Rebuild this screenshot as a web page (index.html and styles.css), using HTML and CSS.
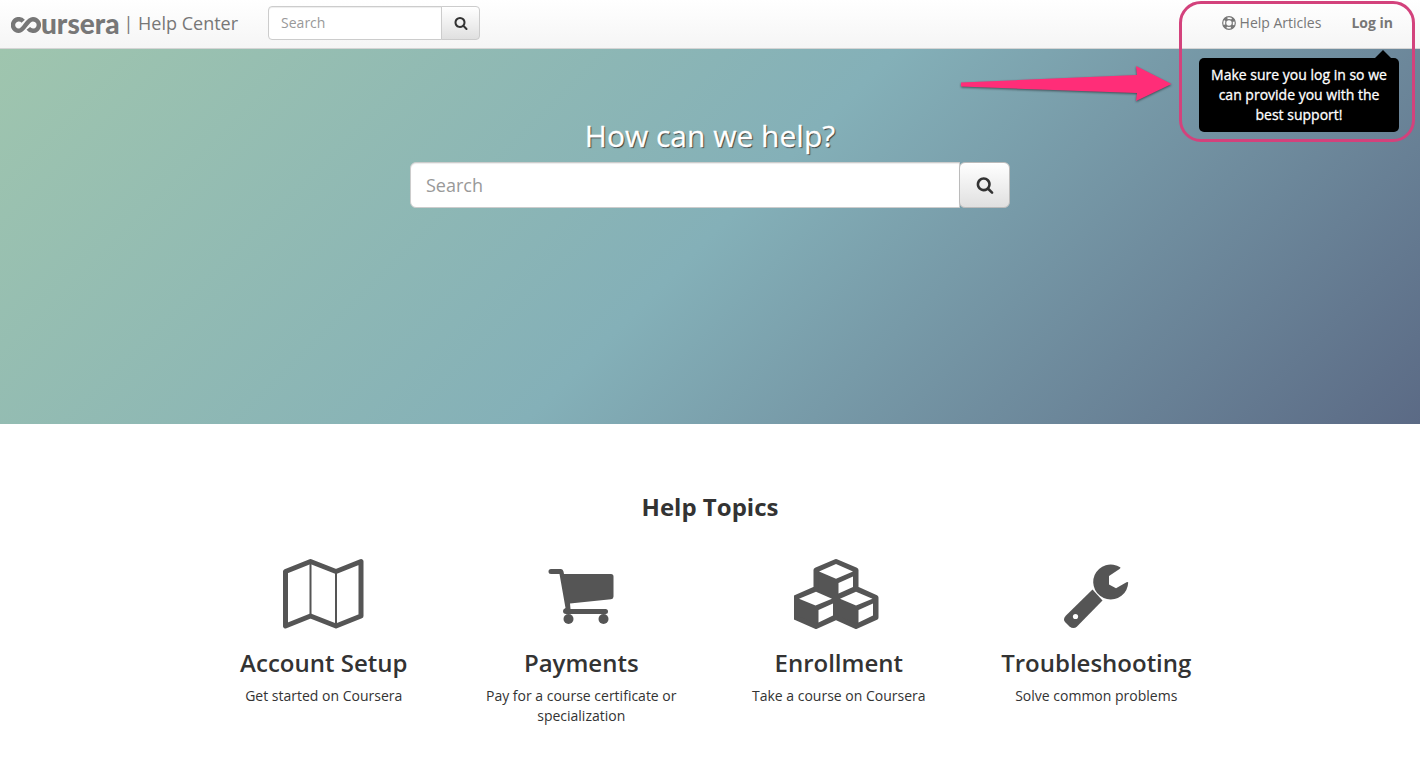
FILE: index.html
```html
<!DOCTYPE html>
<html lang="en">
<head>
    <meta charset="UTF-8">
    <meta name="viewport" content="width=device-width, initial-scale=1.0">
    <title>Coursera Help Center</title>
    <link rel="stylesheet" href="styles.css">
</head>
<body>
    <!-- icons used more than once -->
    <svg class="hidden" width="0" height="0" aria-hidden="true">
        <symbol id="icon-search" viewBox="0 0 1792 1792">
            <path d="M1216 832q0-185-131.5-316.5T768 384 451.5 515.5 320 832t131.5 316.5T768 1280t316.5-131.5T1216 832zm512 832q0 52-38 90t-90 38q-54 0-90-38l-343-342q-179 124-399 124-143 0-273.5-55.5t-225-150-150-225T64 832t55.5-273.5 150-225 225-150T768 128t273.5 55.5 225 150 150 225T1472 832q0 220-124 399l343 343q37 37 37 90z"/>
        </symbol>
    </svg>

    <!-- Navbar -->
    <header class="navbar">
        <a href="#" class="brand">
            <span class="logo">
                <svg class="logo-mark" viewBox="0 0 30 16" role="img" aria-label="co">
                    <path d="M12.200 4.200A5.800 5.800 0 1 0 8 13.800C13.500 13.800 15.500 2.200 22 2.200A5.800 5.800 0 1 1 17.300 11.400"/>
                </svg>
                <span class="logo-word">ursera</span>
            </span>
            <span class="brand-text">| Help Center</span>
        </a>
        <form action="#" class="search search-small">
            <input type="text" name="q" placeholder="Search" aria-label="Search help">
            <button type="submit" aria-label="Search"><svg><use href="#icon-search"/></svg></button>
        </form>
        <nav class="nav-links">
            <a href="#" class="nav-link">
                <svg class="icon-help" viewBox="0 0 14 14">
                    <circle cx="7" cy="7" r="6.300"/>
                    <circle cx="7" cy="7" r="3.300"/>
                    <circle class="ring" cx="7" cy="7" r="5"/>
                </svg>
                Help Articles
            </a>
            <div class="login">
                <a href="#" class="nav-link nav-login" aria-describedby="login-tip">Log in</a>
                <div class="tooltip" id="login-tip" role="tooltip">Make sure you log in so we can provide you with the best support!</div>
            </div>
        </nav>
    </header>

    <!-- callout around the login link -->
    <div class="callout"></div>
    <svg class="callout-arrow" viewBox="0 0 216 44" aria-hidden="true">
        <path d="M3 20.500 179 13 178 4 213.500 22 178 39 179 31 3 24.500Z"/>
    </svg>

    <!-- Hero -->
    <section class="hero">
        <h1>How can we help?</h1>
        <form action="#" class="search search-large">
            <input type="text" name="query" placeholder="Search" aria-label="Search all articles">
            <button type="submit" aria-label="Search"><svg><use href="#icon-search"/></svg></button>
        </form>
    </section>

    <!-- Topics -->
    <main class="topics">
        <h2>Help Topics</h2>
        <div class="topic-grid">
            <a href="#" class="topic">
                <svg class="topic-icon" viewBox="9 4 90 80">
                    <path class="line" d="M15.500 21.500 40.500 11.500 66 21.500 91 11.500V66L66 76 40.500 66 15.500 76Z"/>
                    <path class="fold" d="M40.500 12V66M66 22V76"/>
                </svg>
                <h3>Account Setup</h3>
                <p>Get started on Coursera</p>
            </a>
            <a href="#" class="topic">
                <svg class="topic-icon" viewBox="1 4 90 80">
                    <path d="M16 19H26Q28 19 28.500 21.500L29 24H76Q78.500 24 78.500 26.500V46.500Q78.500 49 76 49.300L35 53.500 35.500 59H70.500A2.500 2.500 0 0 1 70.500 64H31Q28 64 28 61 28 59 30.500 58L24.500 24H16A2.500 2.500 0 0 1 16 19Z"/>
                    <circle cx="33.500" cy="69" r="5"/>
                    <circle cx="68.500" cy="69" r="5"/>
                </svg>
                <h3>Payments</h3>
                <p>Pay for a course certificate or specialization</p>
            </a>
            <a href="#" class="topic">
                <svg class="topic-icon" viewBox="14 4 90 80">
                    <path class="solid" d="M56 11.500 76 20V38.500L96 47.500V67.500L76 76.500 56 67.500 36 76.500 15.500 67.500V47.500L36 38.500V20Z"/>
                    <path class="face" d="M56 14 73 21.500 56 28.700 39 21.500ZM58.500 33 73 26.500V37L58.500 43.500ZM36 41.800 52 48.800 35.500 55.500 19 48.800ZM38.500 60 53 53.500V65.500L38.500 72.500ZM76 41.800 92.500 48.800 76 55.500 60 48.800ZM78.500 60 93 53.500V65.500L78.500 72.500Z"/>
                </svg>
                <h3>Enrollment</h3>
                <p>Take a course on Coursera</p>
            </a>
            <a href="#" class="topic">
                <svg class="topic-icon" viewBox="1 4 90 80">
                    <path d="M70.500 17.500A17.500 17.500 0 1 0 78.200 32.500Q77.800 31.500 76.500 32.300L66 38.200 59 34.500V26L69.500 19Q70.500 18.200 70.500 17.500Z"/>
                    <path d="M42.500 39.500 52.500 50.500 27 76.500Q23.500 79.500 19.500 76.500L15 72Q12.500 69 16 65.500Z"/>
                    <circle class="face" cx="25.500" cy="66.500" r="2.600"/>
                </svg>
                <h3>Troubleshooting</h3>
                <p>Solve common problems</p>
            </a>
        </div>
    </main>
</body>
</html>
```

FILE: styles.css
```css
:root{
    --text: #333;
    --muted: #777;
    --icon: #555;
    --pink: #ff2d78;
}
*{
    box-sizing: border-box;
}
body{
    margin: 0;
    position: relative;
    background-color: #fff;
    color: var(--text);
    font-family: "Open Sans", "Noto Sans", sans-serif;
    font-size: 14px;
    line-height: 20px;
}
a{
    color: inherit;
    text-decoration: none;
}
.hidden{
    position: absolute;
}

/* navbar */
.navbar{
    display: flex;
    align-items: center;
    height: 49px;
    padding: 0 27px 3px 11px;
    background-image: linear-gradient(#fff, #f5f5f5);
    border-bottom: 1px solid #d4d4d4;
    color: var(--muted);
}
.brand{
    display: flex;
    align-items: center;
    gap: 4px;
    margin-right: 30px;
}
.brand-text{
    font-size: 18px;
    white-space: nowrap;
}
.logo{
    display: flex;
    align-items: center;
}
.logo-mark{
    width: 30px;
    height: 16px;
    margin-top: 4px;
    fill: none;
    stroke: var(--muted);
    stroke-width: 4.4;
}
.logo-word{
    font-family: Lato, sans-serif;
    font-size: 28px;
    font-weight: 900;
}
.nav-links{
    display: flex;
    gap: 30px;
    margin-left: auto;
}
.nav-link{
    display: flex;
    align-items: center;
    gap: 4px;
}
.nav-login{
    font-weight: bold;
}
.icon-help{
    width: 14px;
    height: 14px;
    fill: none;
    stroke: var(--muted);
    stroke-width: 1.2;
}
.icon-help .ring{
    stroke-width: 3;
    stroke-dasharray: 3.4 4.45;
    stroke-dashoffset: -2.23;
}
.login{
    position: relative;
}
.tooltip{
    position: absolute;
    top: 45px;
    right: -6px;
    width: 200px;
    padding: 7px 10px;
    border-radius: 5px;
    background-color: #000;
    color: #fff;
    text-align: center;
    -webkit-text-stroke: 0.3px #fff;
}
.tooltip::before{
    content: "";
    position: absolute;
    top: -8px;
    right: 8px;
    border: 8px solid transparent;
    border-top: 0;
    border-bottom-color: #000;
}

/* search forms */
.search{
    display: flex;
}
.search input{
    flex: 1;
    min-width: 0;
    border: 1px solid #ccc;
    background-color: #fff;
    box-shadow: inset 0 1px 1px rgba(0,0,0,0.075);
    color: #555;
    font-family: inherit;
}
.search input::placeholder{
    color: #999;
}
.search button{
    display: flex;
    align-items: center;
    justify-content: center;
    padding: 0;
    margin-left: -1px;
    border: 1px solid #bbb;
    background-image: linear-gradient(#fff, #e0e0e0);
    cursor: pointer;
}
.search svg{
    width: 14px;
    height: 14px;
    fill: var(--text);
}
.search-small{
    width: 212px;
    height: 34px;
}
.search-small input{
    padding: 0 12px;
    border-radius: 4px 0 0 4px;
    font-size: 14px;
}
.search-small button{
    width: 39px;
    border-radius: 0 4px 4px 0;
    border-color: #ccc;
}
.search-large{
    width: 100%;
    max-width: 600px;
    height: 46px;
}
.search-large input{
    padding: 0 15px;
    border-radius: 6px 0 0 6px;
    font-size: 18px;
}
.search-large button{
    width: 51px;
    border-radius: 6px;
}
.search-large svg{
    width: 18px;
    height: 18px;
}

/* callout */
.callout{
    position: absolute;
    top: 1px;
    right: 5px;
    width: 236px;
    height: 141px;
    border: 3px solid #d3427c;
    border-radius: 22px;
    pointer-events: none;
}
.callout-arrow{
    position: absolute;
    top: 62px;
    right: 246px;
    width: 216px;
    height: 44px;
    fill: var(--pink);
    filter: drop-shadow(0 1px 1px rgba(0,0,0,0.5));
}

/* hero */
.hero{
    display: flex;
    flex-direction: column;
    align-items: center;
    min-height: 375px;
    padding: 70px 20px 0;
    background-image: linear-gradient(135deg, #9fc5ae 0%, #84b0b8 50%, #5b6a85 100%);
}
.hero h1{
    margin: 0 0 9px;
    color: #fff;
    font-size: 30px;
    font-weight: normal;
    line-height: 34px;
    text-shadow: 1px 1px 1px #333;
    -webkit-text-stroke: 0.3px #fff;
}

/* topics */
.topics{
    max-width: 1030px;
    margin: 0 auto;
    padding: 69px 0 30px;
    text-align: center;
}
.topics h2{
    margin: 0 0 34px;
    font-size: 24px;
    font-weight: bold;
    line-height: 27px;
}
.topic-grid{
    display: grid;
    grid-template-columns: repeat(4, 1fr);
}
.topic{
    padding: 0 20px;
}
.topic-icon{
    display: block;
    width: 90px;
    height: 80px;
    margin: 0 auto 15px;
    fill: var(--icon);
}
.topic-icon .line{
    fill: none;
    stroke: var(--icon);
    stroke-width: 5;
    stroke-linejoin: round;
}
.topic-icon .fold{
    stroke: var(--icon);
    stroke-width: 2;
}
.topic-icon .solid{
    stroke: var(--icon);
    stroke-width: 5;
    stroke-linejoin: round;
}
.topic-icon .face{
    fill: #fff;
}
.topic h3{
    margin: 0 0 10px;
    font-size: 24px;
    font-weight: 600;
    line-height: 27px;
    white-space: nowrap;
}
.topic p{
    margin: 0;
}
```
